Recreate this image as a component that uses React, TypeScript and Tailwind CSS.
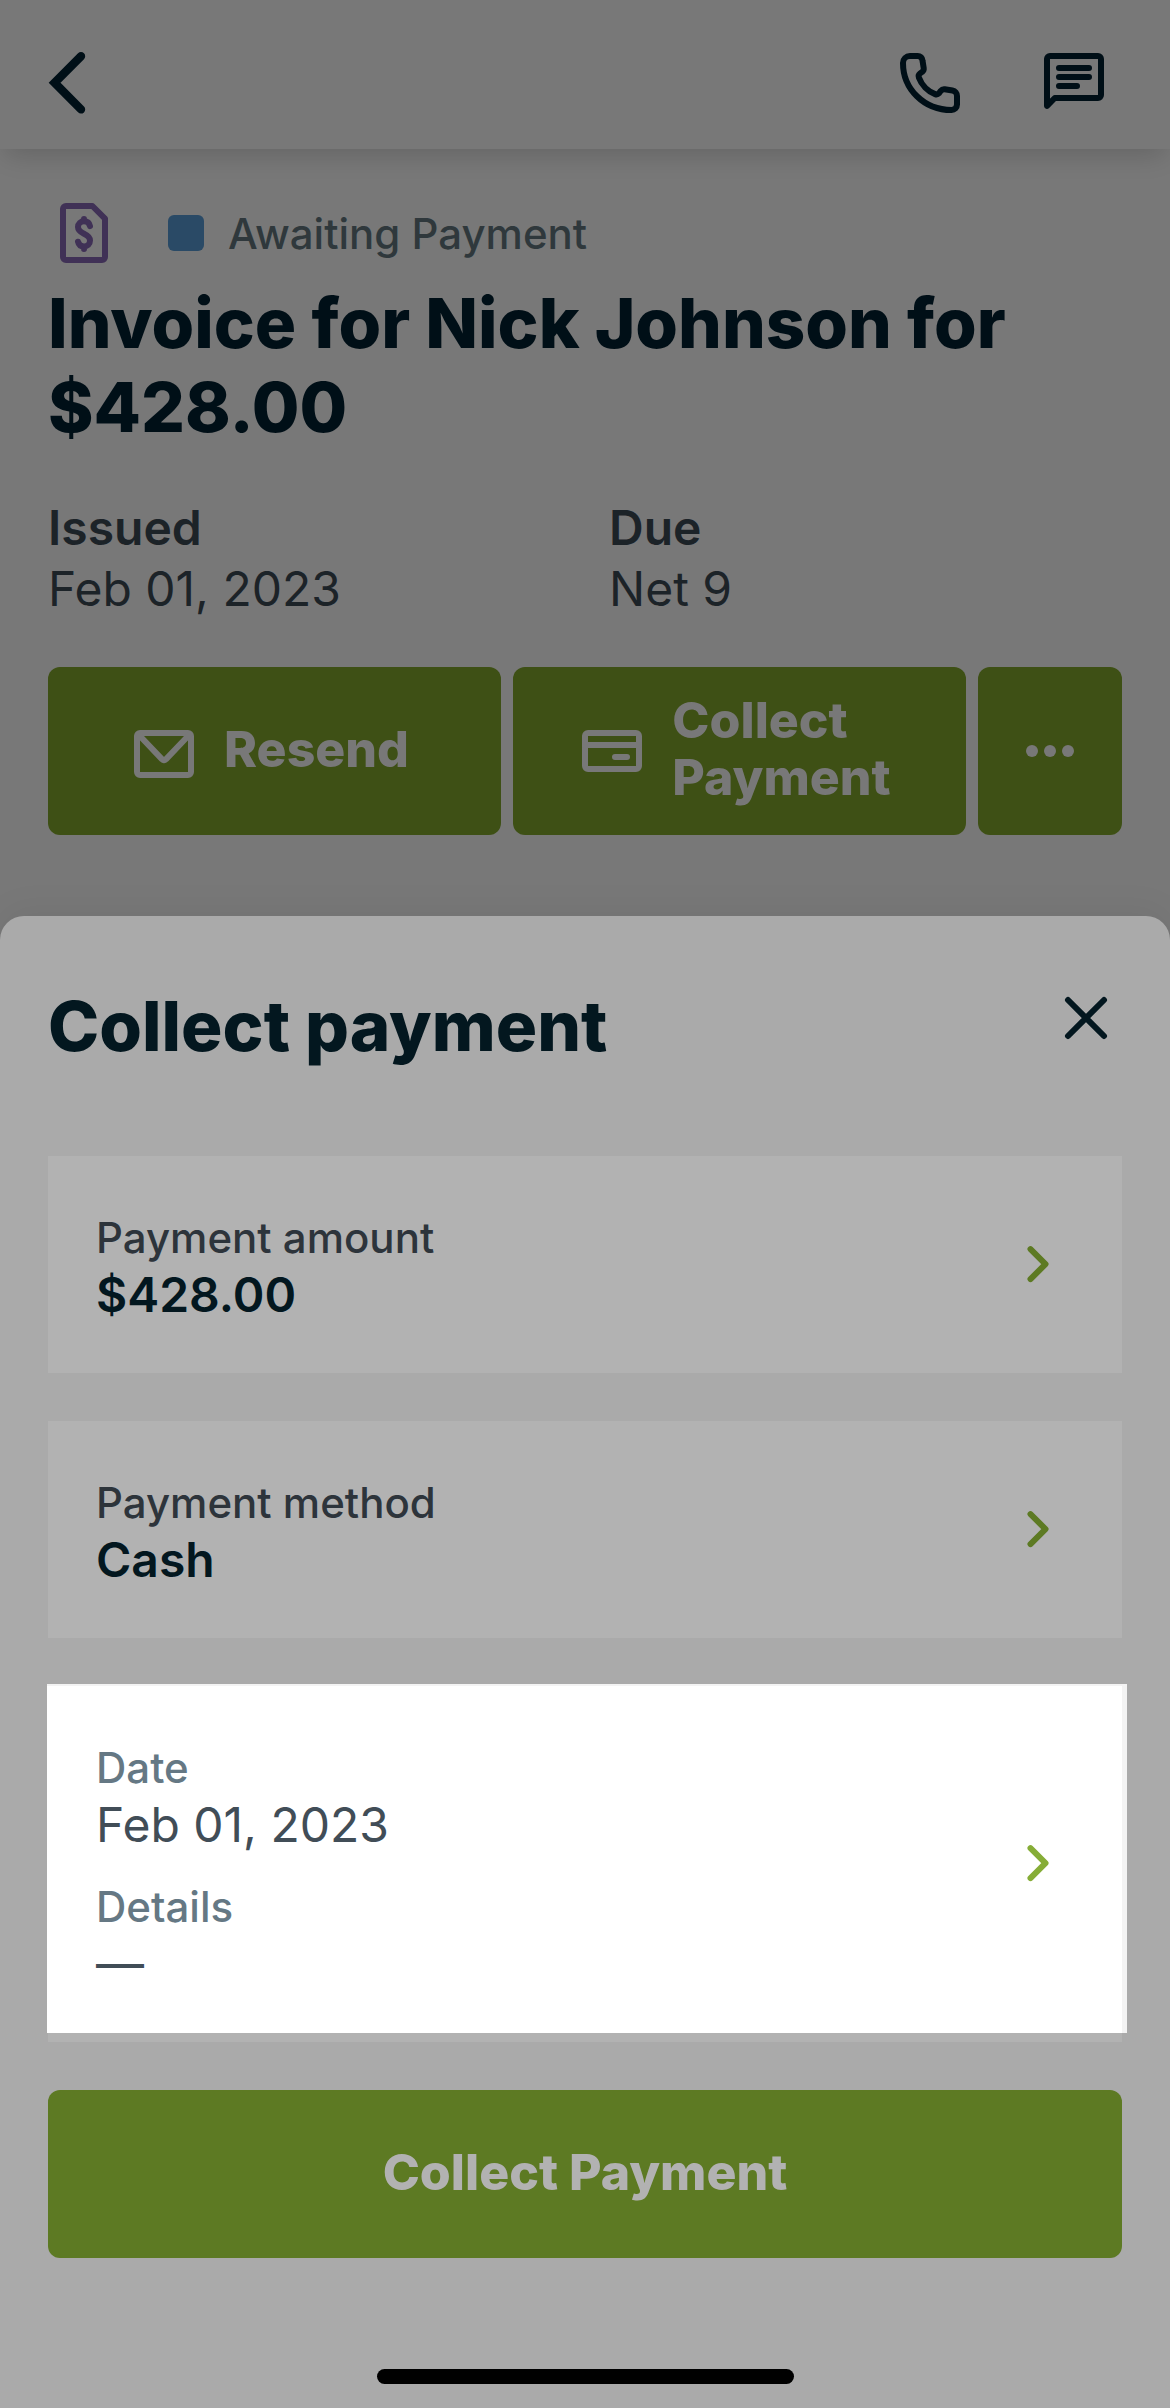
import type { ReactNode } from "react";

function Icon({ children, className = "" }: { children: ReactNode; className?: string }) {
  return (
    <svg
      viewBox="0 0 24 24"
      className={`size-18 shrink-0 ${className}`}
      fill="none"
      stroke="currentColor"
      strokeWidth="2"
      strokeLinecap="round"
      strokeLinejoin="round"
      aria-hidden="true"
    >
      {children}
    </svg>
  );
}

function BackIcon() {
  return (
    <Icon>
      <path d="M15 3.1 6.2 11.9 15 20.8" strokeWidth="2.8" strokeLinejoin="miter" />
    </Icon>
  );
}

function PhoneIcon() {
  return (
    <Icon>
      <path d="M5.3 3H7.9a1.6 1.6 0 0 1 1.6 1.5l.4 2.5a1.4 1.4 0 0 1-.5 1.3l-.7.5a1.2 1.2 0 0 0-.4 1.4c.9 2.4 3 4.6 5.4 5.5a1.2 1.2 0 0 0 1.3-.3l.6-.8a1.4 1.4 0 0 1 1.3-.5l2.6.4A1.8 1.8 0 0 1 21 16.3v2.9a1.8 1.8 0 0 1-1.8 1.8C10 21 3 14 3 5.3A2.3 2.3 0 0 1 5.3 3z" />
    </Icon>
  );
}

function MessageIcon() {
  return (
    <Icon>
      <path d="M3 19.6V4a1 1 0 0 1 1-1h16a1 1 0 0 1 1 1v12a1 1 0 0 1-1 1H5.6z" />
      <path d="M7 7h10M7 10h10M7 13h6" />
    </Icon>
  );
}

function InvoiceIcon() {
  return (
    <Icon className="text-[#403156]">
      <path d="M5 4a1 1 0 0 1 1-1h8.8L19 7.2V20a1 1 0 0 1-1 1H6a1 1 0 0 1-1-1z" />
      <path d="M14 9.7c-.2-1-1-1.6-2-1.6-1.1 0-2 .8-2 1.9 0 2.6 4 1.9 4 4.5 0 1.2-.9 2-2 2-1 0-1.8-.6-2-1.6M12 7.3v.8M12 16.5v.8" />
    </Icon>
  );
}

function MailIcon() {
  return (
    <Icon>
      <rect x="3" y="6" width="18" height="14" rx="1" />
      <path d="m3.5 6.5 7.8 8.2q.7.7 1.4 0l7.8-8.2" />
    </Icon>
  );
}

function CardIcon() {
  return (
    <Icon>
      <rect x="3" y="6" width="18" height="12" rx="1" />
      <path d="M3 10h18M13 14h4" />
    </Icon>
  );
}

function MoreIcon() {
  return (
    <Icon>
      <g fill="currentColor" stroke="none">
        <circle cx="6" cy="12" r="2" />
        <circle cx="12" cy="12" r="2" />
        <circle cx="18" cy="12" r="2" />
      </g>
    </Icon>
  );
}

function CloseIcon() {
  return (
    <Icon>
      <path d="m6 6 12 12M18 6 6 18" />
    </Icon>
  );
}

function ChevronIcon() {
  return (
    <Icon>
      <path d="m9.5 6.7 5 5-5 5" />
    </Icon>
  );
}

function Field({
  label,
  value,
  labelClass,
  valueClass,
}: {
  label: string;
  value: string;
  labelClass: string;
  valueClass: string;
}) {
  return (
    <span className="block">
      <span className={`block text-[42px] leading-[54px] font-medium ${labelClass}`}>{label}</span>
      <span className={`block text-[48px] leading-[60px] ${valueClass}`}>{value}</span>
    </span>
  );
}

function PaymentRow({ label, value }: { label: string; value: string }) {
  return (
    <button
      type="button"
      className="flex w-full items-center justify-between bg-[#b2b2b2] p-12 text-left text-[#5d7a23]"
    >
      <span className="pt-[7px]">
        <Field
          label={label}
          value={value}
          labelClass="text-[#2d343b]"
          valueClass="font-semibold text-[#03171f]"
        />
      </span>
      <ChevronIcon />
    </button>
  );
}

export default function App() {
  return (
    <div className="flex min-h-screen flex-col bg-[#787878] font-['Inter',sans-serif]">
      <header className="flex items-center justify-between pt-[47px] pr-15 pb-[30px] pl-9 text-[#000f17] shadow-[0_12px_24px_-6px_rgba(0,0,0,0.16)]">
        <button type="button" aria-label="Back">
          <BackIcon />
        </button>
        <div className="flex gap-18">
          <button type="button" aria-label="Call">
            <PhoneIcon />
          </button>
          <button type="button" aria-label="Message">
            <MessageIcon />
          </button>
        </div>
      </header>

      <main className="px-12 pt-12 pb-[81px]">
        <div className="flex items-center">
          <InvoiceIcon />
          <span className="ml-12 size-9 rounded-md bg-[#2a4a66]" />
          <span className="ml-6 pt-0.5 text-[42px] leading-[54px] font-medium text-[#2f383c]">
            Awaiting Payment
          </span>
        </div>
        <h1 className="mt-3 text-[69px] leading-[84px] font-extrabold text-[#000f17]">
          Invoice for Nick Johnson for $428.00
        </h1>

        <dl className="mt-12 grid grid-cols-2 gap-12 text-[48px] leading-[61px] text-[#1c2328]">
          <div>
            <dt className="font-semibold">Issued</dt>
            <dd>Feb 01, 2023</dd>
          </div>
          <div>
            <dt className="font-semibold">Due</dt>
            <dd>Net 9</dd>
          </div>
        </dl>

        <div className="mt-12 flex gap-3 text-[50px] leading-[57px] font-extrabold text-[#787878]">
          <button
            type="button"
            className="flex h-42 flex-1 items-center justify-center gap-6 rounded-xl bg-[#3e5015] pr-3"
          >
            <MailIcon />
            <span className="pb-1">Resend</span>
          </button>
          <button
            type="button"
            className="flex h-42 flex-1 items-center justify-center gap-6 rounded-xl bg-[#3e5015] pr-3 text-left"
          >
            <CardIcon />
            <span className="pb-1">
              Collect
              <br />
              Payment
            </span>
          </button>
          <button
            type="button"
            aria-label="More actions"
            className="flex h-42 w-36 items-center justify-center rounded-xl bg-[#3e5015]"
          >
            <MoreIcon />
          </button>
        </div>
      </main>

      <section
        aria-labelledby="sheet-title"
        className="flex grow flex-col rounded-t-3xl bg-[#aaaaaa] px-12 pt-[66px] pb-6 shadow-[0_-6px_36px_rgba(0,0,0,0.05)]"
      >
        <div className="flex items-start justify-between text-[#03171f]">
          <h2 id="sheet-title" className="text-[69px] leading-[88px] font-extrabold">
            Collect payment
          </h2>
          <button type="button" aria-label="Close">
            <CloseIcon />
          </button>
        </div>

        <div className="mt-[86px] flex flex-col gap-12">
          <PaymentRow label="Payment amount" value="$428.00" />
          <PaymentRow label="Payment method" value="Cash" />

          <div className="bg-[#b2b2b2] pb-[9px]">
            <button
              type="button"
              className="flex w-full items-center justify-between bg-white px-12 pt-12 pb-[39px] text-left text-[#86ad37] shadow-[-1px_0_0_#ffffff,5px_0_0_#f3f3f3,5px_-2px_0_#f3f3f3,-1px_-2px_0_#f3f3f3]"
            >
              <span className="flex flex-col gap-[25px] pt-[7px]">
                <Field
                  label="Date"
                  value="Feb 01, 2023"
                  labelClass="text-[#657884]"
                  valueClass="text-[#414d57]"
                />
                <Field
                  label="Details"
                  value="—"
                  labelClass="text-[#657884]"
                  valueClass="text-[#414d57]"
                />
              </span>
              <ChevronIcon />
            </button>
          </div>

          <button
            type="button"
            className="h-42 rounded-xl bg-[#5d7a23] pb-1 text-[50px] leading-[57px] font-extrabold text-[#b2b2b2]"
          >
            Collect Payment
          </button>
        </div>

        <div className="mx-auto mt-auto h-[15px] w-[417px] rounded-full bg-black" />
      </section>
    </div>
  );
}
